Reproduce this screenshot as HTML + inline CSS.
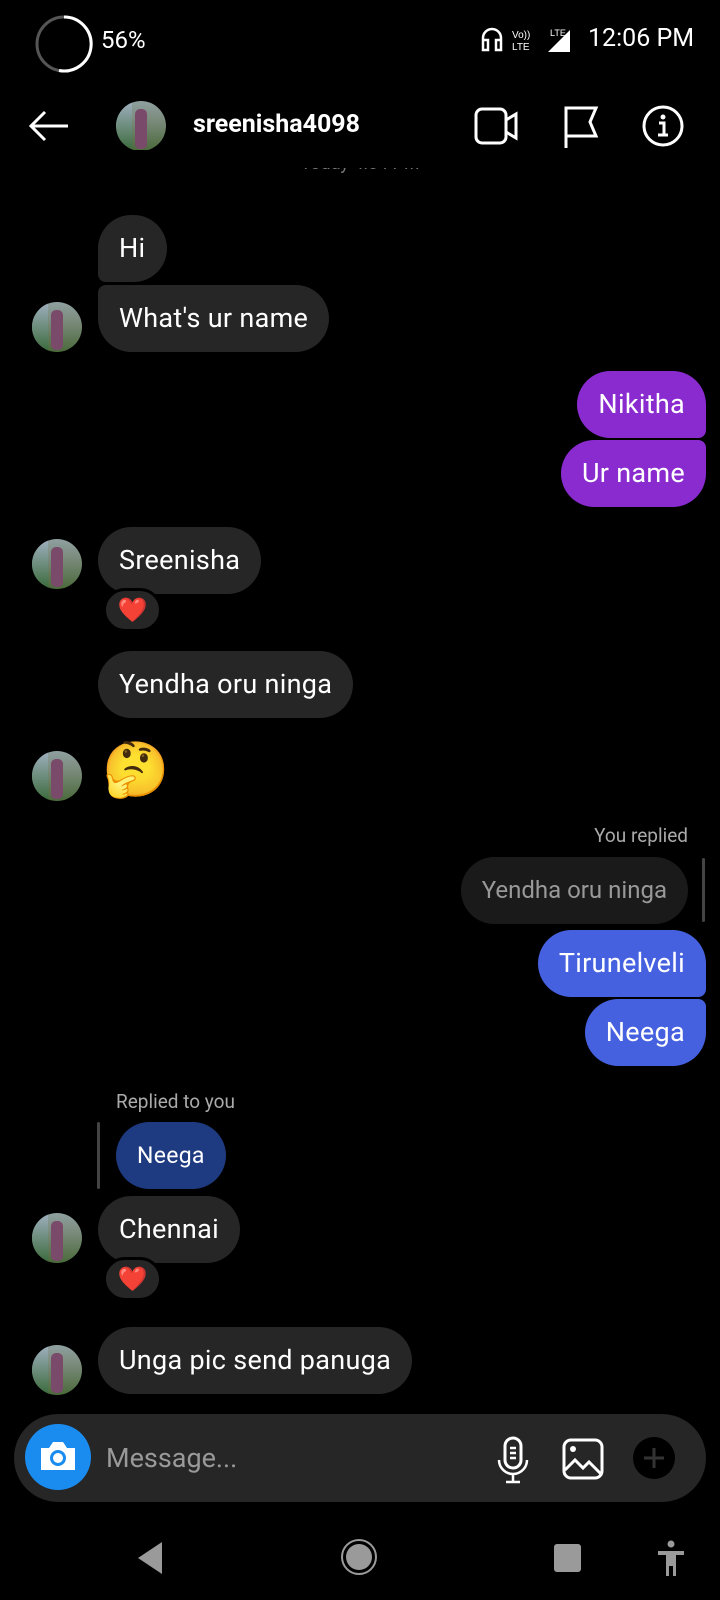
<!DOCTYPE html>
<html><head><meta charset="utf-8"><style>
*{margin:0;padding:0;box-sizing:border-box}
body{width:720px;height:1600px;background:#000;position:relative;overflow:hidden;font-family:"Roboto","Liberation Sans",sans-serif;color:#fff}
.a{position:absolute}
.b{position:absolute;height:67px;border-radius:34px;font-size:27px;letter-spacing:0.3px;line-height:67px;padding:0 21px;white-space:nowrap;background:#262626}
.p{background:#8a2bd0}
.bl{background:#4561e0}
.av{position:absolute;width:50px;height:50px;border-radius:50%;background:linear-gradient(180deg,#8fa0a0 0,#7a8a7a 40%,#4a6a3a 100%);overflow:hidden}
.av::before{content:"";position:absolute;left:0;top:0;width:16px;height:50px;background:linear-gradient(#a0b0c0,#3a6a3a)}
.av::after{content:"";position:absolute;left:19px;top:8px;width:12px;height:40px;background:#7a4a6a;border-radius:5px}
.h{position:absolute;width:59px;height:44px;border-radius:22px;background:#262626;border:3px solid #000;text-align:center;font-size:24px;line-height:38px;color:#e0245e}
</style></head><body>
<svg class="a" style="left:34px;top:14px" width="60" height="60"><circle cx="30" cy="30" r="27" fill="none" stroke="#555" stroke-width="3"/><path d="M30 3 A27 27 0 1 1 25 56.5" fill="none" stroke="#fff" stroke-width="3"/></svg>
<div class="a" style="left:101px;top:26px;font-size:24px">56%</div>
<svg class="a" style="left:480px;top:26px" width="90" height="28"><path d="M3 20v-8a9 9 0 0 1 18 0v8M3 14h5v10H3zM16 14h5v10h-5z" fill="none" stroke="#fff" stroke-width="2.5"/><text x="32" y="12" font-size="10" fill="#fff" font-family="Liberation Sans">Vo))</text><text x="32" y="24" font-size="10" fill="#fff" font-family="Liberation Sans">LTE</text><text x="70" y="10" font-size="9" fill="#fff" font-family="Liberation Sans">LTE</text><path d="M90 4V26H68Z" fill="#fff"/></svg>
<div class="a" style="left:588px;top:24px;font-size:25px">12:06 PM</div>
<svg class="a" style="left:28px;top:110px" width="42" height="32"><path d="M40 16H3M17 2L3 16l14 14" fill="none" stroke="#fff" stroke-width="3"/></svg>
<div class="av" style="left:116px;top:101px"></div>
<div class="a" style="left:193px;top:110px;font-size:25px;font-weight:bold">sreenisha4098</div>
<div class="a" style="left:0;top:158px;width:720px;text-align:center;font-size:18px;color:#777;height:20px;line-height:12px;overflow:hidden">Today 4:54 PM</div>
<div class="a" style="left:0;top:150px;width:720px;height:18px;background:#000"></div>
<svg class="a" style="left:474px;top:106px" width="46" height="40"><rect x="2" y="3" width="30" height="34" rx="6" fill="none" stroke="#fff" stroke-width="3"/><path d="M32 14l10-6v24l-10-6" fill="none" stroke="#fff" stroke-width="3"/></svg>
<svg class="a" style="left:562px;top:104px" width="38" height="46"><path d="M4 44V4h30l-6 14 6 14H4" fill="none" stroke="#fff" stroke-width="3"/></svg>
<svg class="a" style="left:641px;top:104px" width="44" height="44"><circle cx="22" cy="22" r="19" fill="none" stroke="#fff" stroke-width="3"/><circle cx="22" cy="13" r="2.5" fill="#fff"/><path d="M18 19h5v12M17 31h10" fill="none" stroke="#fff" stroke-width="3"/></svg>
<div class="b" style="left:98px;top:215px;width:69px;border-bottom-left-radius:8px">Hi</div>
<div class="b" style="left:98px;top:285px;border-top-left-radius:8px">What's ur name</div>
<div class="av" style="left:32px;top:302px"></div>
<div class="b p" style="right:14px;top:371px;border-bottom-right-radius:8px">Nikitha</div>
<div class="b p" style="right:14px;top:440px;border-top-right-radius:8px">Ur name</div>
<div class="av" style="left:32px;top:539px"></div>
<div class="b" style="left:98px;top:527px">Sreenisha</div>
<div class="h" style="left:103px;top:588px">❤️</div>
<div class="b" style="left:98px;top:651px">Yendha oru ninga</div>
<div class="av" style="left:32px;top:751px"></div>
<div class="a" style="left:102px;top:740px;font-size:54px;line-height:62px">🤔</div>
<div class="a" style="right:32px;top:824px;font-size:19px;color:#aaa">You replied</div>
<div class="b" style="right:32px;top:857px;background:#1a1a1a;color:#999;font-size:24px;letter-spacing:0">Yendha oru ninga</div>
<div class="a" style="left:702px;top:858px;width:3px;height:64px;background:#444;border-radius:2px"></div>
<div class="b bl" style="right:14px;top:930px;border-bottom-right-radius:8px">Tirunelveli</div>
<div class="b bl" style="right:14px;top:999px;border-top-right-radius:8px">Neega</div>
<div class="a" style="left:116px;top:1090px;font-size:19px;color:#aaa">Replied to you</div>
<div class="a" style="left:97px;top:1122px;width:3px;height:67px;background:#444;border-radius:2px"></div>
<div class="b" style="left:116px;top:1122px;background:#1e3a80;font-size:23px;padding:0 21px">Neega</div>
<div class="b" style="left:98px;top:1196px">Chennai</div>
<div class="av" style="left:32px;top:1213px"></div>
<div class="h" style="left:103px;top:1257px">❤️</div>
<div class="b" style="left:98px;top:1327px">Unga pic send panuga</div>
<div class="av" style="left:32px;top:1345px"></div>
<div class="a" style="left:14px;top:1414px;width:692px;height:88px;border-radius:44px;background:#262626"></div>
<div class="a" style="left:25px;top:1424px;width:66px;height:66px;border-radius:50%;background:#1a8cf0"></div>
<svg class="a" style="left:38px;top:1438px" width="40" height="36"><path d="M3 10h8l4-6h10l4 6h8v22H3z" fill="#fff"/><circle cx="20" cy="20" r="8" fill="#1a8cf0"/><circle cx="20" cy="20" r="5" fill="#fff"/></svg>
<div class="a" style="left:106px;top:1442px;font-size:27px;color:#999">Message...</div>
<svg class="a" style="left:496px;top:1436px" width="34" height="50"><rect x="9" y="2" width="16" height="30" rx="8" fill="none" stroke="#fff" stroke-width="3"/><path d="M3 24a14 14 0 0 0 28 0M17 38v8M10 46h14M14 12h6M14 17h6M14 22h6" fill="none" stroke="#fff" stroke-width="2.5"/></svg>
<svg class="a" style="left:562px;top:1438px" width="42" height="42"><rect x="2" y="2" width="38" height="38" rx="7" fill="none" stroke="#fff" stroke-width="3"/><circle cx="11" cy="11" r="3" fill="#fff"/><path d="M3 32l10-10 8 8 6-6 12 12" fill="none" stroke="#fff" stroke-width="3"/></svg>
<div class="a" style="left:633px;top:1437px;width:42px;height:42px;border-radius:50%;background:#000"></div>
<svg class="a" style="left:633px;top:1437px" width="42" height="42"><path d="M21 11v20M11 21h20" stroke="#333" stroke-width="3"/></svg>
<svg class="a" style="left:136px;top:1540px" width="30" height="36"><path d="M26 2V34L2 18Z" fill="#9a9a9a"/></svg>
<svg class="a" style="left:340px;top:1538px" width="38" height="38"><circle cx="19" cy="19" r="17" fill="none" stroke="#9a9a9a" stroke-width="2"/><circle cx="19" cy="19" r="13" fill="#9a9a9a"/></svg>
<div class="a" style="left:554px;top:1544px;width:27px;height:28px;border-radius:3px;background:#9a9a9a"></div>
<svg class="a" style="left:656px;top:1540px" width="30" height="38"><circle cx="15" cy="4" r="3.5" fill="#9a9a9a"/><path d="M2 11h26v4h-8v21h-3v-10h-4v10h-3V15H2z" fill="#9a9a9a"/></svg>
</body></html>
